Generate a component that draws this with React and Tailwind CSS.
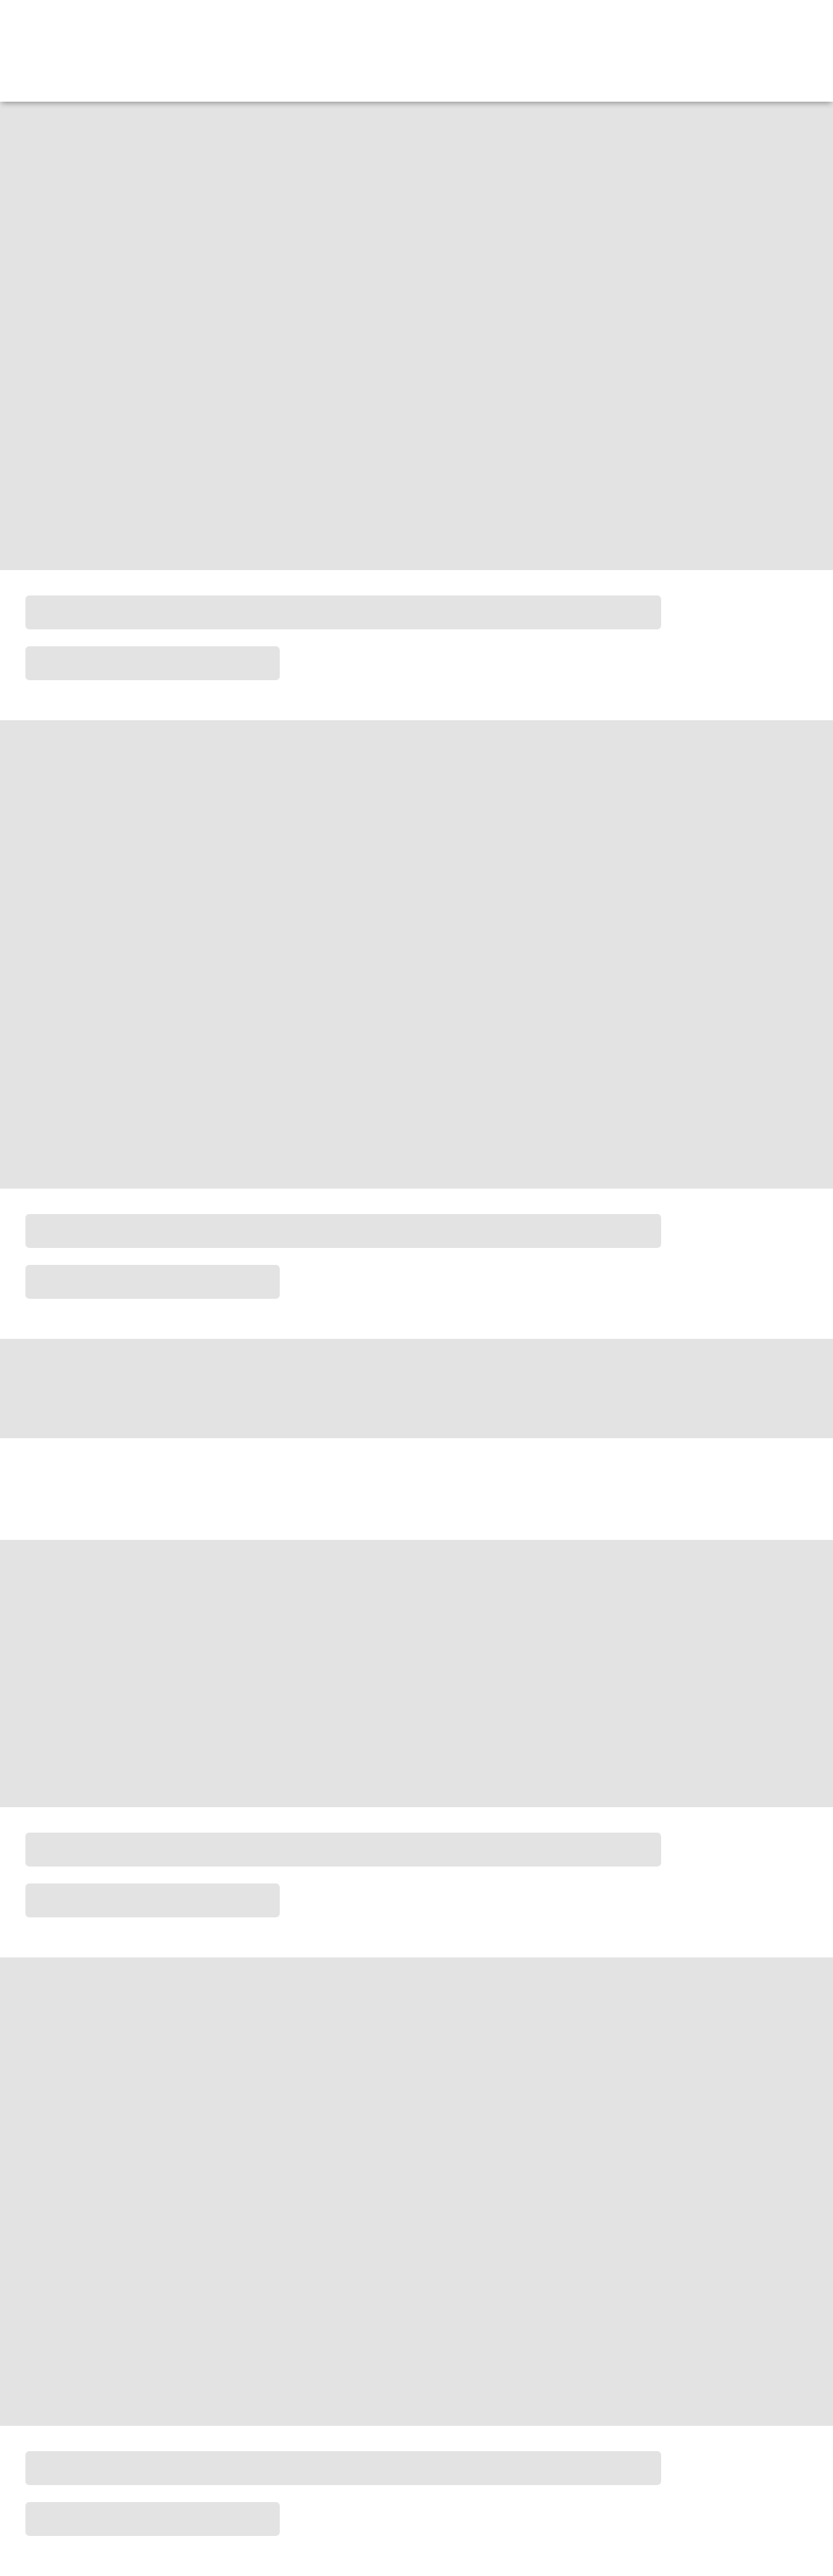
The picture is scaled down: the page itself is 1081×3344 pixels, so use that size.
const GREY = "bg-[#e3e3e3]";

function Block({ h }) {
  return <div className={`w-full ${GREY} ${h}`} />;
}

function TextLines() {
  return (
    <div className="flex h-[195px] flex-col gap-[22px] pl-[33px] pt-[33px]">
      <div className={`h-[44px] w-[825px] rounded-[5px] ${GREY}`} />
      <div className={`h-[44px] w-[330px] rounded-[5px] ${GREY}`} />
    </div>
  );
}

export default function App() {
  return (
    <div className="min-h-[3344px] w-full bg-white">
      <header className="relative z-10 h-[132px] w-full bg-white shadow-[0_4px_7px_-2px_rgba(0,0,0,0.35)]" />
      <main className="flex flex-col">
        <Block h="h-[608px]" />
        <TextLines />
        <Block h="h-[608px]" />
        <TextLines />
        <Block h="h-[129px]" />
        <div className="h-[132px]" />
        <Block h="h-[347px]" />
        <TextLines />
        <Block h="h-[608px]" />
        <TextLines />
      </main>
    </div>
  );
}
